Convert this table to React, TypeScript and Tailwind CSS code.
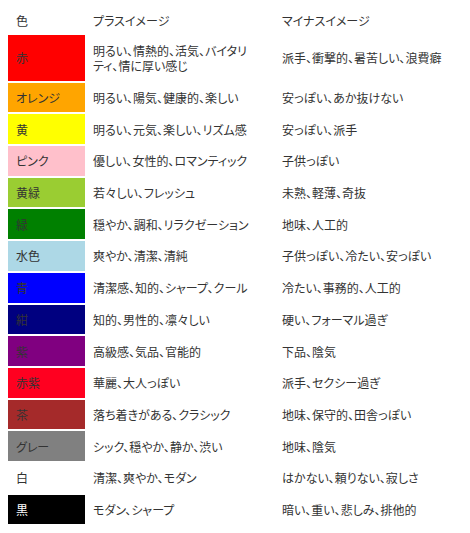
import React from "react";

type Row = { name: string; bg: string; text: string; plus: string; minus: string; tall?: boolean };

const rows: Row[] = [
  { name: "赤", bg: "bg-[#ff0000]", text: "text-[#333333]", plus: "明るい、情熱的、活気、バイタリティ、情に厚い感じ", minus: "派手、衝撃的、暑苦しい、浪費癖", tall: true },
  { name: "オレンジ", bg: "bg-[#ffa500]", text: "text-[#333333]", plus: "明るい、陽気、健康的、楽しい", minus: "安っぽい、あか抜けない" },
  { name: "黄", bg: "bg-[#ffff00]", text: "text-[#333333]", plus: "明るい、元気、楽しい、リズム感", minus: "安っぽい、派手" },
  { name: "ピンク", bg: "bg-[#ffc0cb]", text: "text-[#333333]", plus: "優しい、女性的、ロマンティック", minus: "子供っぽい" },
  { name: "黄緑", bg: "bg-[#9acd32]", text: "text-[#333333]", plus: "若々しい、フレッシュ", minus: "未熟、軽薄、奇抜" },
  { name: "緑", bg: "bg-[#008000]", text: "text-[#333333]", plus: "穏やか、調和、リラクゼーション", minus: "地味、人工的" },
  { name: "水色", bg: "bg-[#add8e6]", text: "text-[#333333]", plus: "爽やか、清潔、清純", minus: "子供っぽい、冷たい、安っぽい" },
  { name: "青", bg: "bg-[#0000ff]", text: "text-[#333333]", plus: "清潔感、知的、シャープ、クール", minus: "冷たい、事務的、人工的" },
  { name: "紺", bg: "bg-[#000080]", text: "text-[#333333]", plus: "知的、男性的、凛々しい", minus: "硬い、フォーマル過ぎ" },
  { name: "紫", bg: "bg-[#800080]", text: "text-[#333333]", plus: "高級感、気品、官能的", minus: "下品、陰気" },
  { name: "赤紫", bg: "bg-[#ff0020]", text: "text-[#333333]", plus: "華麗、大人っぽい", minus: "派手、セクシー過ぎ" },
  { name: "茶", bg: "bg-[#a52a2a]", text: "text-[#333333]", plus: "落ち着きがある、クラシック", minus: "地味、保守的、田舎っぽい" },
  { name: "グレー", bg: "bg-[#808080]", text: "text-[#333333]", plus: "シック、穏やか、静か、渋い", minus: "地味、陰気" },
  { name: "白", bg: "bg-white", text: "text-[#333333]", plus: "清潔、爽やか、モダン", minus: "はかない、頼りない、寂しさ" },
  { name: "黒", bg: "bg-black", text: "text-white", plus: "モダン、シャープ", minus: "暗い、重い、悲しみ、排他的" },
];

export default function App() {
  return (
    <div
      className="w-[470px] h-[533px] bg-white text-[12px] leading-[15px] text-[#333333] overflow-hidden [font-feature-settings:'palt']"
      style={{ fontFamily: '"Noto Sans CJK JP", "Noto Sans", sans-serif' }}
    >
      <div className="flex flex-col gap-[2px] pl-[8px]">
        <div className="flex h-[33px] pt-[13px]">
          <div className="w-[77px] pl-[8px]">色</div>
          <div className="w-[189px] pl-[8px]">プラスイメージ</div>
          <div className="flex-1 pl-[8px]">マイナスイメージ</div>
        </div>
        {rows.map((r) => (
          <div key={r.name} className={`flex ${r.tall ? "h-[45.7px]" : "h-[29.7px]"}`}>
            <div className={`w-[77px] pl-[8px] flex items-center ${r.bg} ${r.text}`}>{r.name}</div>
            <div className="w-[189px] pl-[8px] flex items-center">
              <span className="w-[160px]">{r.plus}</span>
            </div>
            <div className="flex-1 pl-[8px] flex items-center">{r.minus}</div>
          </div>
        ))}
      </div>
    </div>
  );
}
